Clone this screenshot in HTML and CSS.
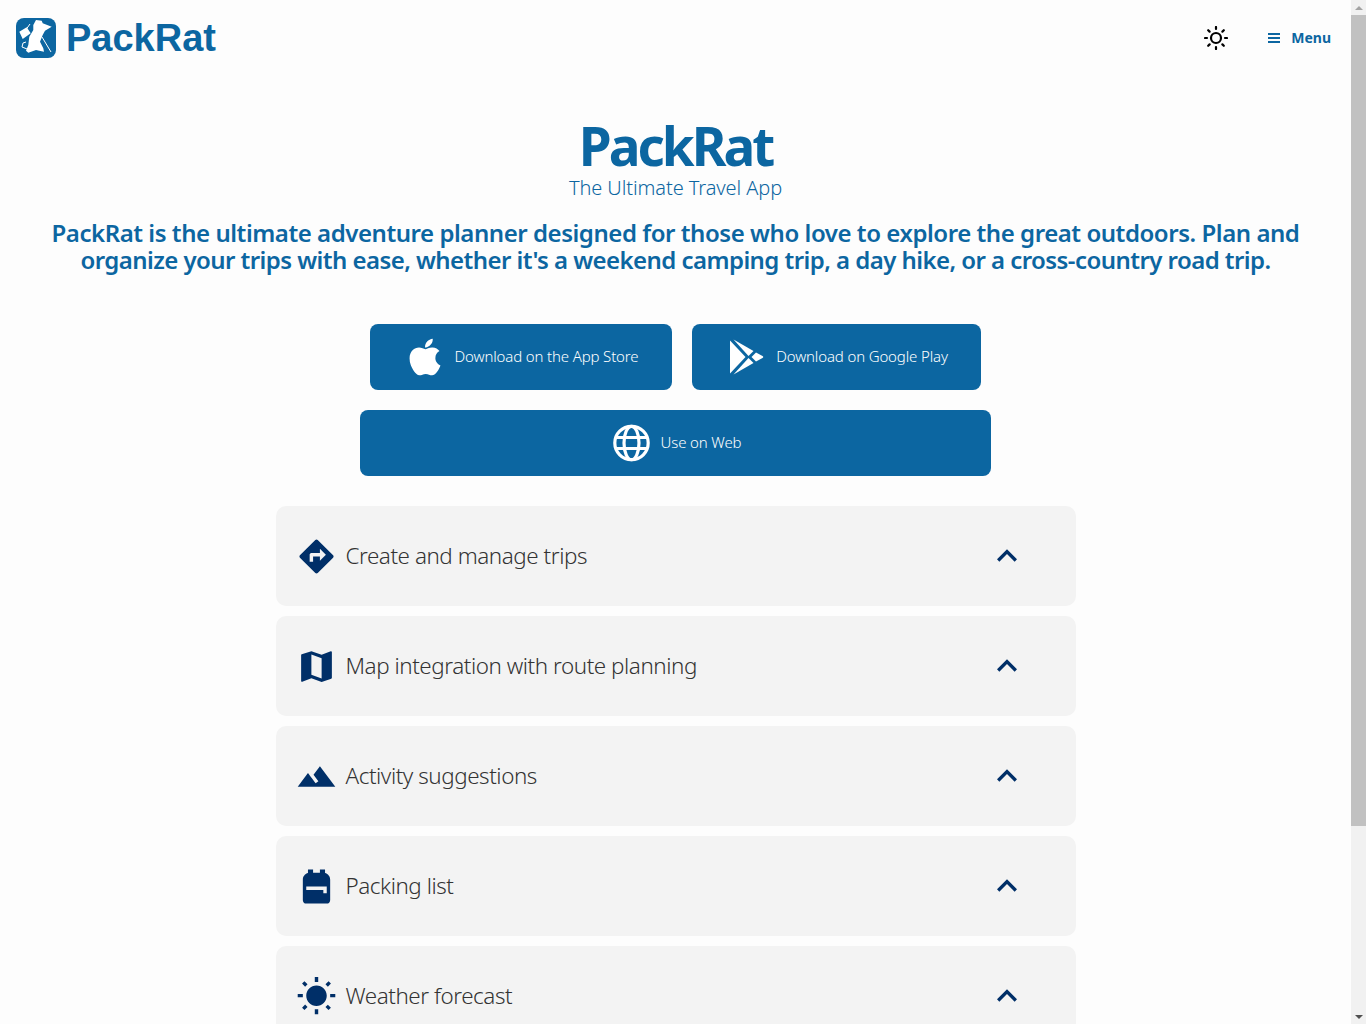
FILE: index.html
```html
<!DOCTYPE html>
<html lang="en">
<head>
    <meta charset="UTF-8">
    <meta name="viewport" content="width=device-width, initial-scale=1.0">
    <title>PackRat</title>
    <link rel="stylesheet" href="styles.css">
</head>
<body>
    <header class="topbar">
        <a class="brand" href="#">
            <svg class="brand-logo" viewBox="0 0 40 40">
                <rect width="40" height="40" rx="8" fill="#0c66a1"/>
                <path fill="#fff" d="M3.3 13.7l7.4-4.4 4 6-8 5.700zM17.300 7L20 2l5.700.7 1 2.600 9 3.400-6.700 4-2.300 4.300-2.700 6.700 3.300 6.600.7 3.400-4.700-1-3.300-.7-7.700 2.700-2.300-2 2.300-5.700 1-8.300 4-6.700z"/>
                <path fill="none" stroke="#fff" stroke-width="1" d="M11 31l-5-2 1-4 3-1M9 13l5-7M26 19l9 15"/>
            </svg>
            <span class="brand-name">PackRat</span>
        </a>
        <div class="topbar-actions">
            <svg class="theme-icon" viewBox="0 0 24 24" fill="none" stroke="#000" stroke-width="2.2" stroke-linecap="round">
                <circle cx="12" cy="12" r="5"/>
                <path d="M12 1v2M12 21v2M4.200 4.200l1.400 1.400M18.400 18.400l1.400 1.400M1 12h2M21 12h2M4.200 19.800l1.400-1.400M18.400 5.600l1.400-1.400"/>
            </svg>
            <button class="menu-btn">
                <svg class="menu-icon" viewBox="0 0 12 10" fill="#0c66a1"><path d="M0 0h12v2H0zM0 4h12v2H0zM0 8h12v2H0z"/></svg>
                Menu
            </button>
        </div>
    </header>

    <main class="content">
        <h1 class="hero-title">PackRat</h1>
        <h2 class="hero-sub">The Ultimate Travel App</h2>
        <p class="hero-text">PackRat is the ultimate adventure planner designed for those who love to explore the great outdoors. Plan and <span class="hero-text-end">organize your trips with ease, whether it's a weekend camping trip, a day hike, or a cross-country road trip.</span></p>

        <div class="downloads">
            <a class="dl-btn dl-app" href="#">
                <svg class="dl-icon" viewBox="0 0 384 512" fill="#fff"><path d="M318.7 268.7c-.2-36.7 16.4-64.4 50-84.8-18.8-26.9-47.2-41.7-84.7-44.6-35.5-2.8-74.3 20.7-88.5 20.7-15 0-49.4-19.7-76.4-19.7C63.3 141.2 4 184.8 4 273.5q0 39.3 14.4 81.2c12.8 36.7 59 126.7 107.2 125.2 25.2-.6 43-17.9 75.8-17.9 31.8 0 48.3 17.9 76.4 17.9 48.6-.7 90.4-82.5 102.6-119.3-65.2-30.7-61.7-90-61.7-91.9zm-56.6-164.2c27.3-32.4 24.8-61.9 24-72.5-24.1 1.4-52 16.4-67.9 34.9-17.5 19.8-27.8 44.3-25.6 71.9 26.1 2 49.9-11.4 69.5-34.3z"/></svg>
                <span class="dl-label">Download on the App Store</span>
            </a>
            <a class="dl-btn dl-play" href="#">
                <svg class="dl-icon" viewBox="0 0 42 42" fill="#fff">
                    <path d="M5 4.500v33l15.500-16.500z"/>
                    <path d="M8.500 3.500l20 11.500-5 5z"/>
                    <path d="M8.500 38.500l20-11.500-5-5z"/>
                    <path d="M31 16.500l6.500 3.500c1 .6 1 1.400 0 2l-6.500 3.500-4.500-4.500z"/>
                </svg>
                <span class="dl-label">Download on Google Play</span>
            </a>
            <a class="dl-btn dl-web" href="#">
                <svg class="dl-icon" viewBox="0 0 42 42" fill="none" stroke="#fff" stroke-width="3.200">
                    <circle cx="21.500" cy="21" r="16.700"/>
                    <ellipse cx="21.500" cy="21" rx="7.500" ry="16.700"/>
                    <path d="M5.500 15.500h32M5.500 26.500h32"/>
                </svg>
                <span class="dl-label">Use on Web</span>
            </a>
        </div>

        <section class="features">
            <div class="feature">
                <svg class="feature-icon" viewBox="0 0 24 24"><path d="M21.71 11.29l-9-9c-.39-.39-1.02-.39-1.41 0l-9 9c-.39.39-.39 1.02 0 1.41l9 9c.39.39 1.02.39 1.41 0l9-9c.39-.38.39-1.01 0-1.41zM14 14.5V12h-4v3H8v-4c0-.55.45-1 1-1h5V7.5l3.5 3.5-3.5 3.5z"/></svg>
                <span class="feature-name">Create and manage trips</span>
                <svg class="feature-arrow" viewBox="0 0 24 24"><path d="M7.41 15.41L12 10.83l4.59 4.58L18 14l-6-6-6 6z"/></svg>
            </div>
            <div class="feature">
                <svg class="feature-icon" viewBox="0 0 24 24"><path d="M20.5 3l-.16.03L15 5.1 9 3 3.36 4.9c-.21.07-.36.25-.36.48V20.5c0 .28.22.5.5.5l.16-.03L9 18.9l6 2.1 5.64-1.9c.21-.07.36-.25.36-.48V3.5c0-.28-.22-.5-.5-.5zM15 19l-6-2.11V5l6 2.11V19z"/></svg>
                <span class="feature-name">Map integration with route planning</span>
                <svg class="feature-arrow" viewBox="0 0 24 24"><path d="M7.41 15.41L12 10.83l4.59 4.58L18 14l-6-6-6 6z"/></svg>
            </div>
            <div class="feature">
                <svg class="feature-icon" viewBox="0 0 24 24"><path d="M14 6l-3.75 5 2.85 3.8-1.6 1.2C9.81 13.75 7 10 7 10l-6 8h22L14 6z"/></svg>
                <span class="feature-name">Activity suggestions</span>
                <svg class="feature-arrow" viewBox="0 0 24 24"><path d="M7.41 15.41L12 10.83l4.59 4.58L18 14l-6-6-6 6z"/></svg>
            </div>
            <div class="feature">
                <svg class="feature-icon" viewBox="0 0 24 24"><path d="M20 8v12c0 1.1-.9 2-2 2H6c-1.1 0-2-.9-2-2V8c0-1.86 1.28-3.41 3-3.86V2h3v2h4V2h3v2.14c1.72.45 3 2 3 3.86zM6 12v2h10v2h2v-4H6z"/></svg>
                <span class="feature-name">Packing list</span>
                <svg class="feature-arrow" viewBox="0 0 24 24"><path d="M7.41 15.41L12 10.83l4.59 4.58L18 14l-6-6-6 6z"/></svg>
            </div>
            <div class="feature">
                <svg class="feature-icon" viewBox="0 0 24 24"><path d="M6.76 4.84l-1.8-1.79-1.41 1.41 1.79 1.79 1.42-1.41zM4 10.5H1v2h3v-2zm9-9.95h-2V3.5h2V.55zm7.45 3.91l-1.41-1.41-1.79 1.79 1.41 1.41 1.79-1.79zm-3.21 13.7l1.79 1.8 1.41-1.41-1.8-1.79-1.4 1.4zM20 10.5v2h3v-2h-3zm-8-5c-3.31 0-6 2.69-6 6s2.69 6 6 6 6-2.69 6-6-2.69-6-6-6zm-1 16.95h2V19.5h-2v2.95zm-7.45-3.91l1.41 1.41 1.79-1.8-1.41-1.41-1.79 1.8z"/></svg>
                <span class="feature-name">Weather forecast</span>
                <svg class="feature-arrow" viewBox="0 0 24 24"><path d="M7.41 15.41L12 10.83l4.59 4.58L18 14l-6-6-6 6z"/></svg>
            </div>
        </section>
    </main>

    <div class="scrollbar">
        <span class="scroll-arrow scroll-up"></span>
        <span class="scroll-thumb"></span>
        <span class="scroll-arrow scroll-down"></span>
    </div>
</body>
</html>
```

FILE: styles.css
```css
body {
    margin: 0;
    padding-right: 15px;
    background-color: #fdfdfd;
    font-family: "Noto Sans", "Open Sans", sans-serif;
}

a {
    text-decoration: none;
}

.topbar {
    display: flex;
    justify-content: space-between;
    align-items: center;
    height: 76px;
    padding: 0 20px 0 16px;
}

.brand {
    display: flex;
    align-items: center;
    gap: 10px;
}

.brand-logo {
    width: 40px;
    height: 40px;
}

.brand-name {
    font-family: "Liberation Sans", Arial, sans-serif;
    font-size: 38px;
    font-weight: 700;
    color: #0c66a1;
}

.topbar-actions {
    display: flex;
    align-items: center;
    gap: 40px;
}

.theme-icon {
    width: 24px;
    height: 24px;
}

.menu-btn {
    display: flex;
    align-items: center;
    gap: 11px;
    padding: 0;
    border: none;
    background: none;
    font-family: inherit;
    font-size: 14px;
    line-height: 18px;
    font-weight: 700;
    color: #0c66a1;
}

.menu-icon {
    width: 12px;
    height: 10px;
}

.content {
    display: flex;
    flex-direction: column;
    align-items: center;
    padding: 0 40px;
}

.hero-title {
    margin: 39px 0 0;
    font-size: 53px;
    line-height: 61px;
    font-weight: 700;
    letter-spacing: -3px;
    color: #0c66a1;
}

.hero-sub {
    margin: 0;
    font-size: 20px;
    line-height: 23px;
    font-weight: 300;
    letter-spacing: -0.09px;
    color: #0c66a1;
}

.hero-text {
    margin: 20px 0 0;
    font-size: 24px;
    line-height: 27px;
    font-weight: 600;
    letter-spacing: -0.45px;
    text-align: center;
    color: #0c66a1;
}

.hero-text-end {
    letter-spacing: -0.56px;
}

.downloads {
    display: flex;
    flex-wrap: wrap;
    justify-content: center;
    gap: 20px;
    width: 631px;
    margin-top: 51px;
}

.dl-btn {
    display: flex;
    align-items: center;
    justify-content: center;
    gap: 9px;
    height: 66px;
    border-radius: 8px;
    background-color: #0c66a1;
    font-size: 15px;
    font-weight: 300;
    letter-spacing: -0.14px;
    color: #fff;
}

.dl-label {
    padding-bottom: 2px;
}

.dl-app {
    width: 302px;
}

.dl-play {
    width: 289px;
}

.dl-web {
    width: 100%;
}

.dl-icon {
    width: 42px;
    height: 42px;
}

.features {
    display: flex;
    flex-direction: column;
    gap: 10px;
    width: 800px;
    margin-top: 30px;
    overflow: hidden;
    height: 518px;
}

.feature {
    display: flex;
    flex-shrink: 0;
    align-items: center;
    height: 100px;
    padding: 0 49px 0 20px;
    box-sizing: border-box;
    border-radius: 10px;
    background-color: #f3f3f3;
}

.feature-icon {
    width: 41px;
    height: 41px;
    fill: #002f68;
}

.feature-name {
    flex: 1;
    margin-left: 9px;
    padding-bottom: 2px;
    font-size: 22.4px;
    font-weight: 300;
    letter-spacing: -0.44px;
    color: #333;
}

.feature-arrow {
    width: 40px;
    height: 40px;
    fill: #002f68;
}

/* page scrollbar, the window doesn't draw one */
.scrollbar {
    position: fixed;
    top: 0;
    right: 0;
    bottom: 0;
    display: flex;
    flex-direction: column;
    width: 15px;
    background-color: #f1f1f1;
}

.scroll-arrow {
    display: flex;
    justify-content: center;
    align-items: center;
    height: 15px;
}

.scroll-arrow::before {
    content: "";
    border-left: 4px solid transparent;
    border-right: 4px solid transparent;
}

.scroll-up::before {
    border-bottom: 4px solid #a3a3a3;
}

.scroll-down {
    margin-top: auto;
}

.scroll-down::before {
    border-top: 4px solid #505050;
}

.scroll-thumb {
    height: 811px;
    background-color: #c1c1c1;
}
```
